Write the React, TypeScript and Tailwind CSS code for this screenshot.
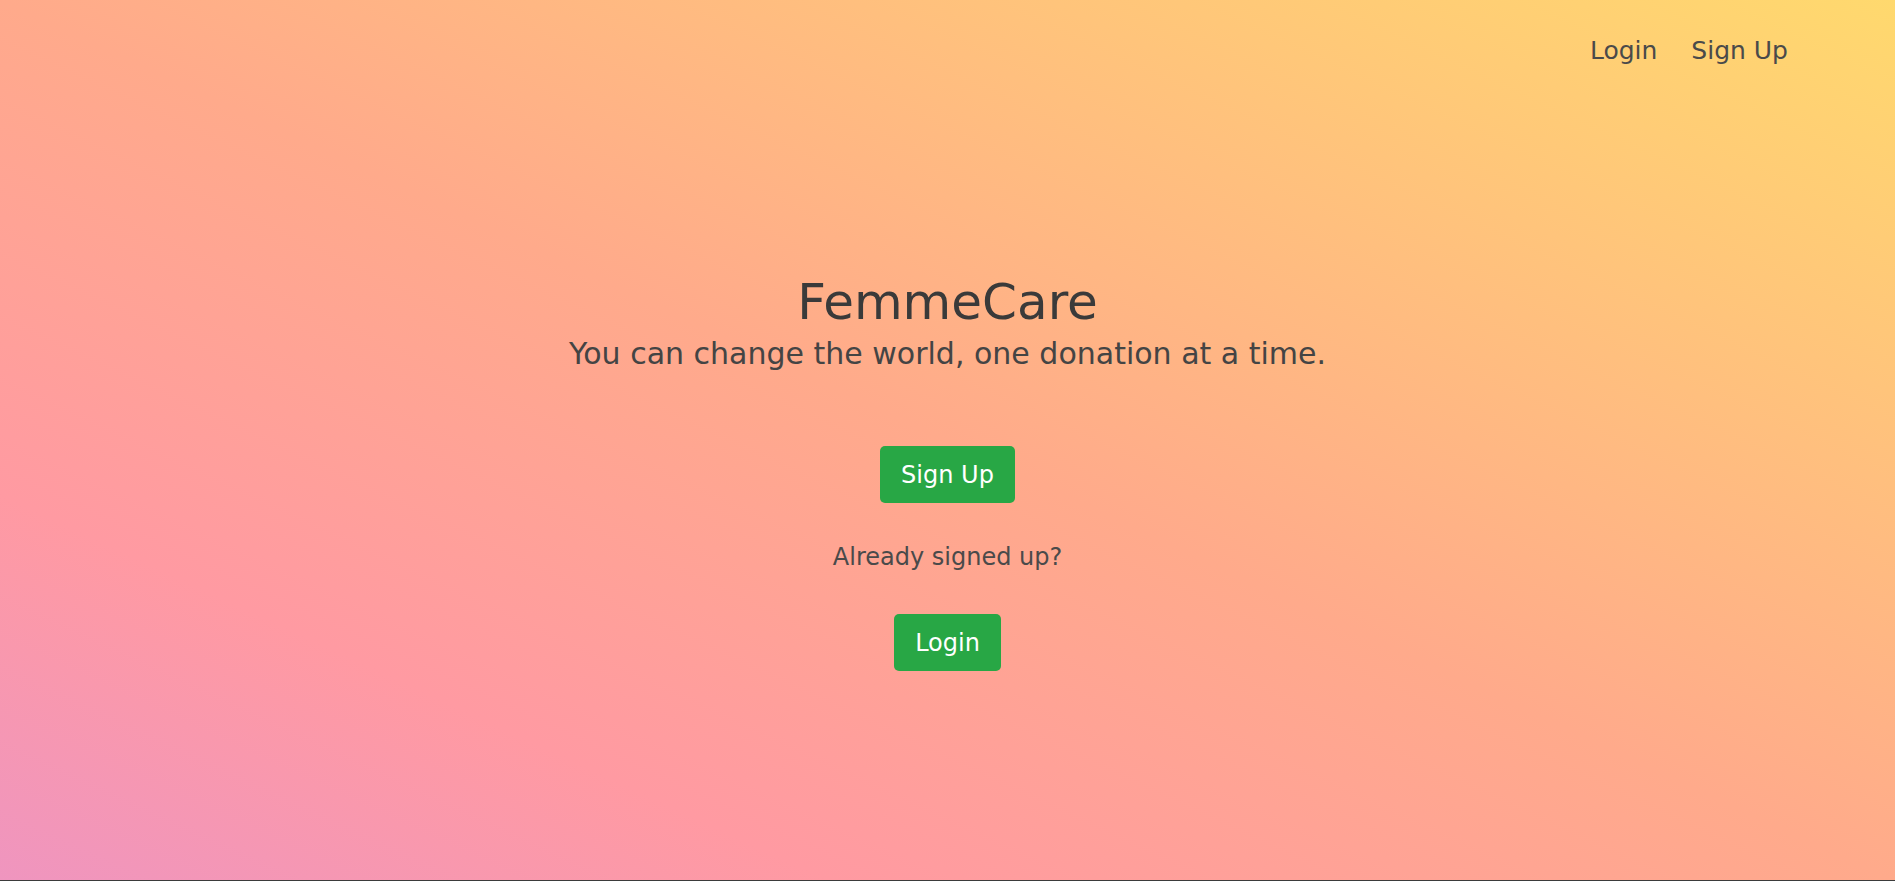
export default function App() {
  return (
    <div
      className="relative flex h-[881px] w-full flex-col overflow-hidden bg-[linear-gradient(to_top_right,#ef95bf_0%,#ff9aa2_22%,#ffaa8b_50%,#ffd96e_100%)] text-[#3b3b3b]"
      style={{ fontFamily: '"DejaVu Sans", "Liberation Sans", sans-serif' }}
    >
      {/* NAV */}
      <nav className="flex h-[102px] items-center justify-end gap-[34px] pr-[107px] text-[25px] text-[#4a4a4a]">
        <a href="#" className="hover:text-black">Login</a>
        <a href="#" className="hover:text-black">Sign Up</a>
      </nav>

      {/* HERO */}
      <main className="flex flex-col items-center">
        <h1 className="mt-[170px] text-[50px] leading-[60px] text-[#3a3a3a]">FemmeCare</h1>
        <p className="mt-[4px] text-[30px] leading-[36px] text-[#444]">
          You can change the world, one donation at a time.
        </p>

        <button className="mt-[74px] h-[57px] w-[135px] rounded-[5px] bg-[#28a745] text-[24px] text-white">
          Sign Up
        </button>

        <p className="mt-[39px] text-[24px] leading-[30px] text-[#4a4a4a]">Already signed up?</p>

        <button className="mt-[42px] h-[57px] w-[107px] rounded-[5px] bg-[#28a745] text-[24px] text-white">
          Login
        </button>
      </main>

      <div className="absolute bottom-0 left-0 h-px w-full bg-[#3b3b3b]" />
    </div>
  );
}
